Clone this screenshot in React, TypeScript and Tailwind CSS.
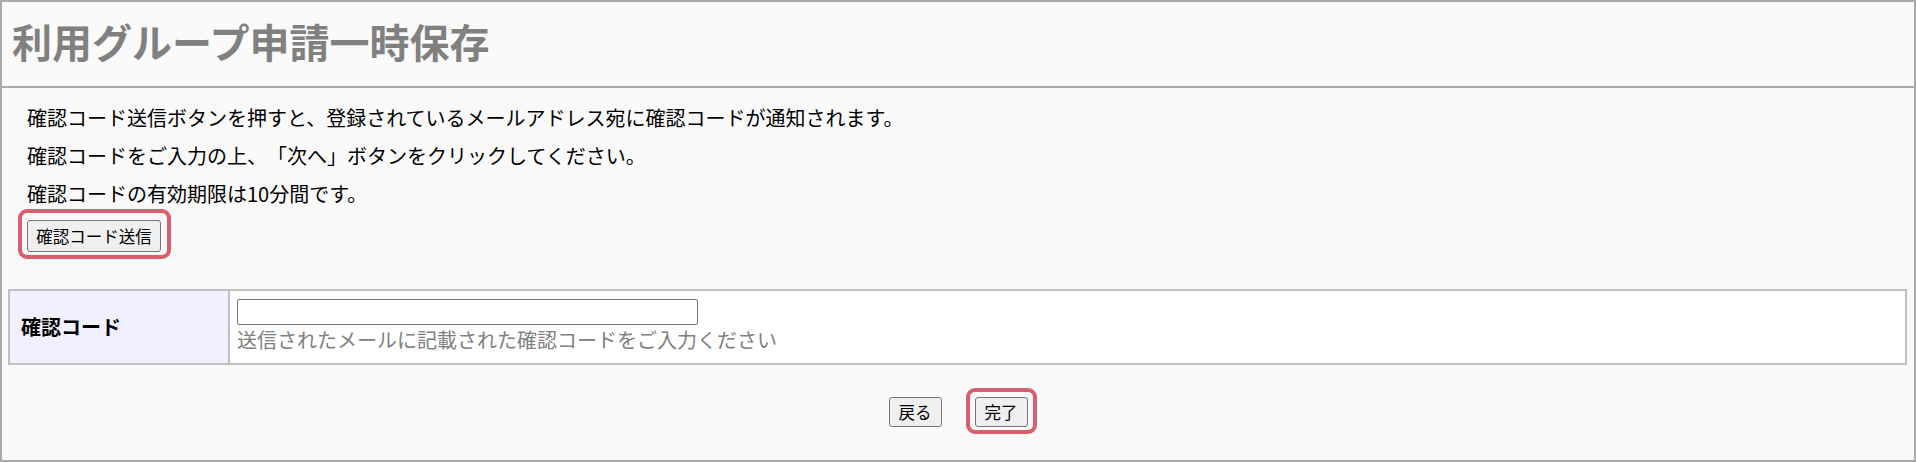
import React from "react";

function Btn({ label, w, h }: { label: string; w: string; h: string }) {
  return (
    <button
      type="button"
      className={`${w} ${h} flex items-center justify-center rounded-[3px] border border-[#767676] bg-[#efefef] px-0 text-[16.5px] leading-none text-black`}
    >
      {label}
    </button>
  );
}

export default function App() {
  return (
    <div className="box-border h-[462px] w-[1916px] border-2 border-[#a9a9a9] bg-[#f9f9f9] font-['Noto_Sans_CJK_JP','Noto_Sans',sans-serif] text-black [text-spacing-trim:space-all]">
      <div className="box-border h-[86px] border-b-2 border-[#a9a9a9] bg-[#fafafa] pl-[10px] pt-[19px]">
        <h1 className="text-[40px] font-bold leading-[40px] tracking-[0px] text-[#808080]">
          利用グループ申請一時保存
        </h1>
      </div>
      <div className="pl-[25px] pt-[11px] text-[20px]">
        <p className="leading-[38px]">
          確認コード送信ボタンを押すと、登録されているメールアドレス宛に確認コードが通知されます。
        </p>
        <p className="leading-[38px]">確認コードをご入力の上、「次へ」ボタンをクリックしてください。</p>
        <p className="leading-[38px]">確認コードの有効期限は10分間です。</p>
        <div className="relative mt-[7px] inline-block">
          <Btn label="確認コード送信" w="w-[134px]" h="h-[32px]" />
          <div className="pointer-events-none absolute bottom-[-7px] left-[-9px] right-[-10px] top-[-11px] rounded-[9px] border-4 border-[#d95f6f]" />
        </div>
      </div>
      <div className="ml-[6px] mr-[7px] mt-[37px] flex h-[76px] border-2 border-[#c0c0c0] bg-white">
        <div className="flex w-[220px] items-center border-r-2 border-[#c0c0c0] bg-[#f0f0ff] pl-[11px] text-[20px] font-bold">
          確認コード
        </div>
        <div className="flex flex-col pl-[7px] pt-[8px]">
          <input
            type="text"
            className="box-border h-[26px] w-[461px] rounded-[2px] border border-[#767676] bg-white outline-none"
          />
          <span className="text-[20px] leading-[30px] text-[#808080]">
            送信されたメールに記載された確認コードをご入力ください
          </span>
        </div>
      </div>
      <div className="mt-[32px] flex justify-center gap-[33px]">
        <Btn label="戻る" w="w-[53px]" h="h-[30px]" />
        <div className="relative">
          <Btn label="完了" w="w-[53px]" h="h-[30px]" />
          <div className="pointer-events-none absolute bottom-[-7px] left-[-9px] right-[-9px] top-[-9px] rounded-[9px] border-4 border-[#d95f6f]" />
        </div>
      </div>
    </div>
  );
}
